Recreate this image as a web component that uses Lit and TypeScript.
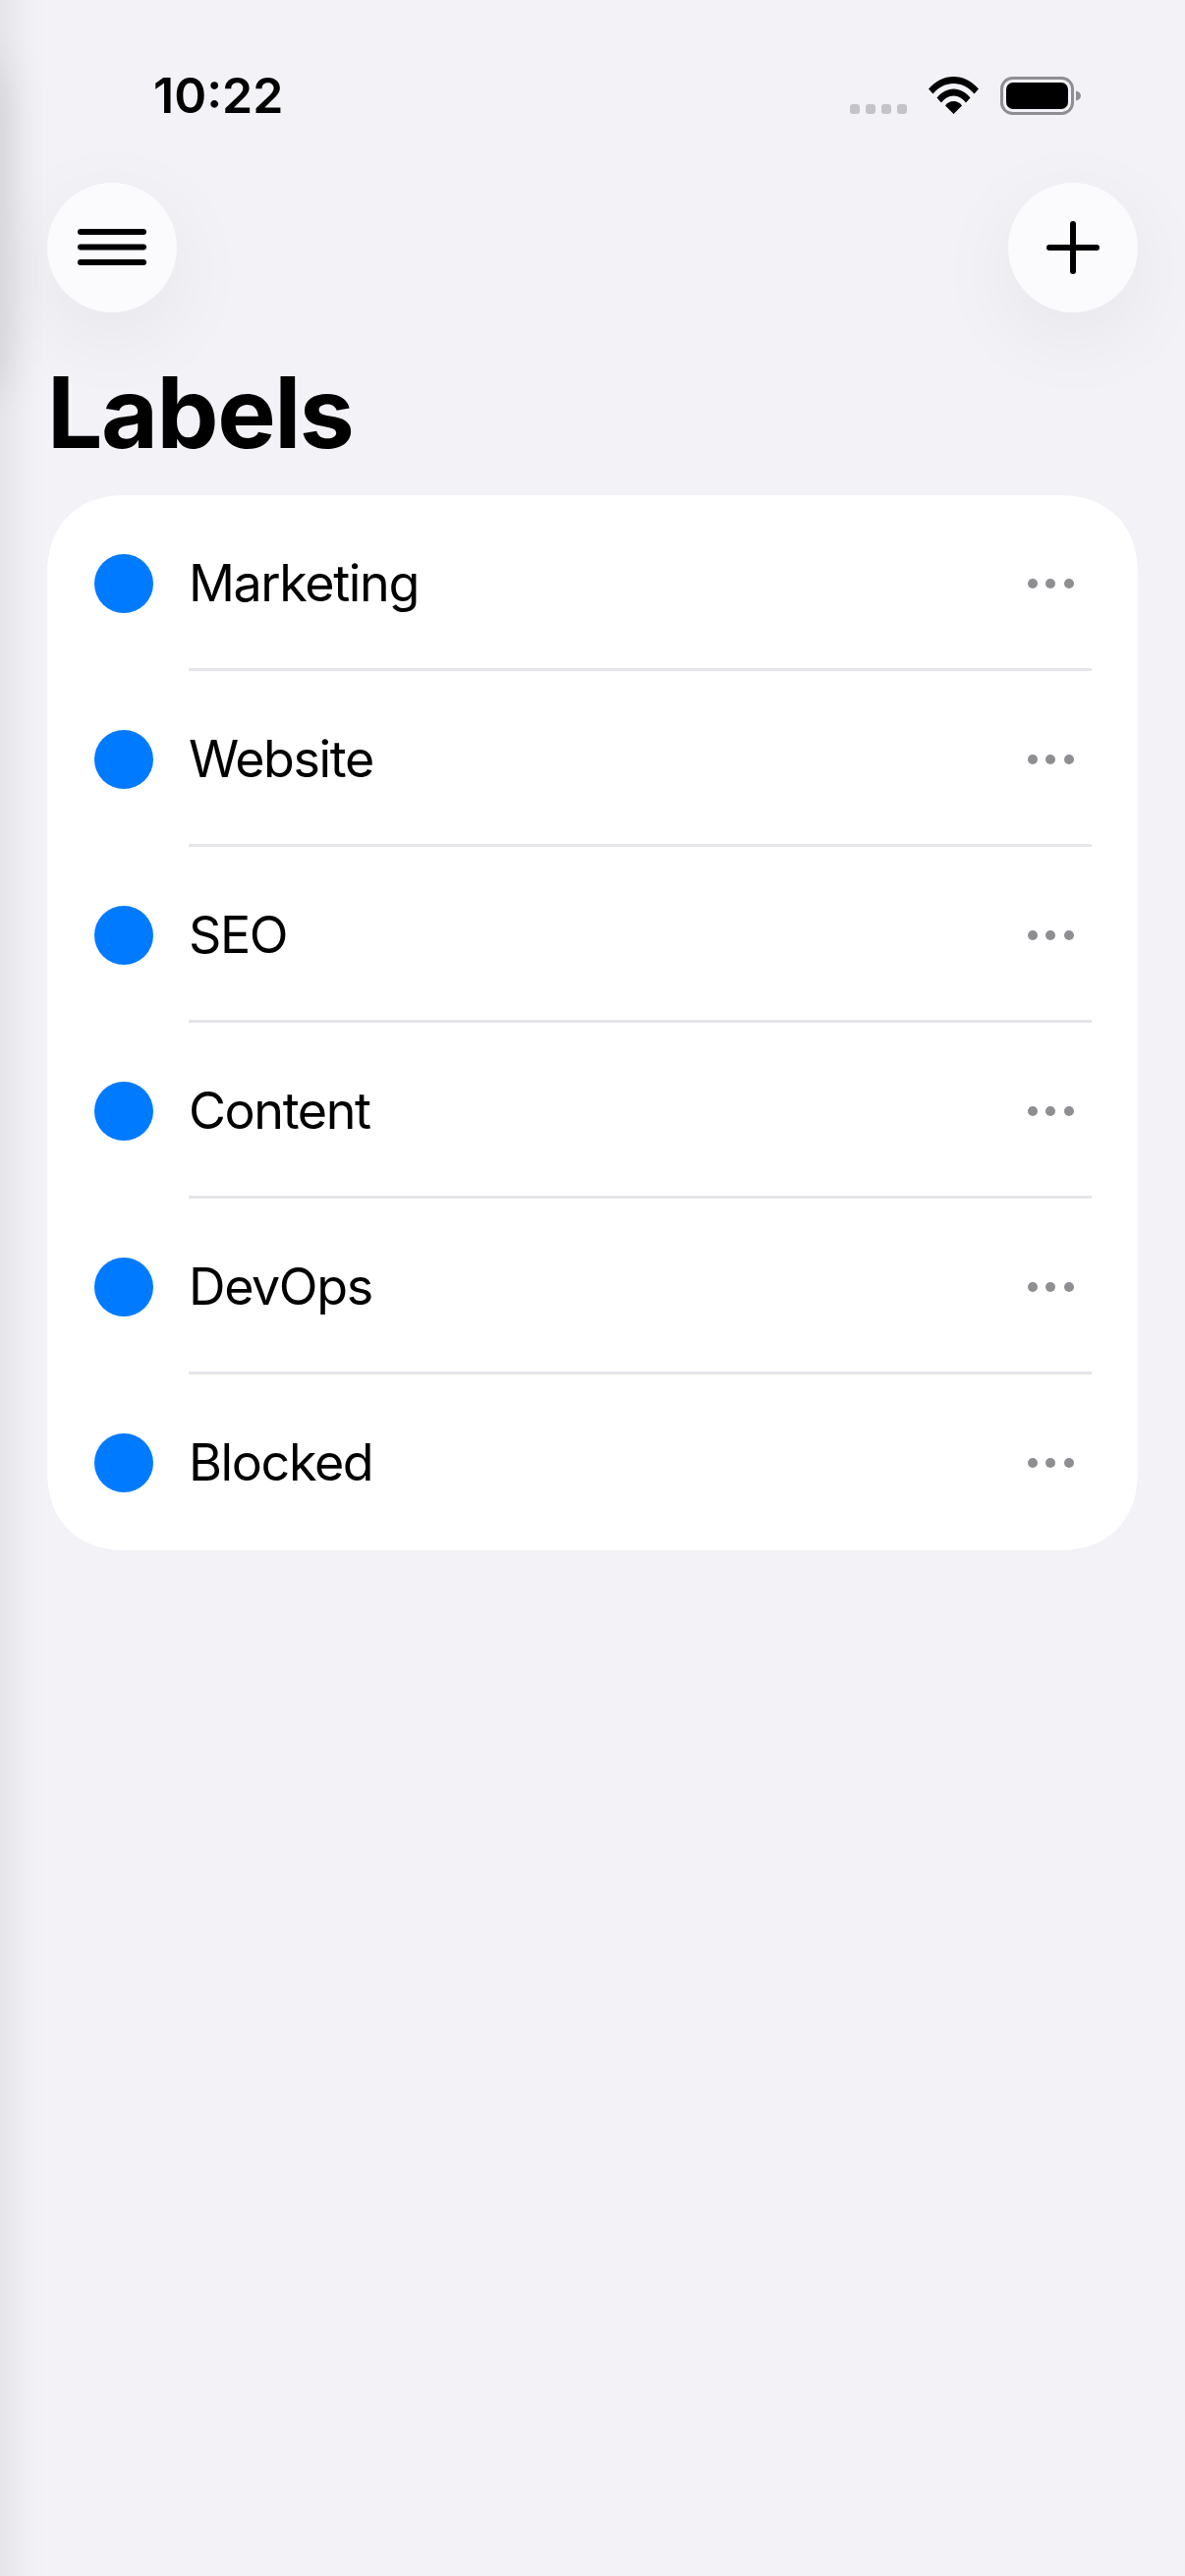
import { css, html, LitElement } from 'lit';
import { customElement } from 'lit/decorators.js';

const LABELS = ['Marketing', 'Website', 'SEO', 'Content', 'DevOps', 'Blocked'];

@customElement('app-root')
export class AppRoot extends LitElement {
  static override styles = css`
    :host {
      display: block;
      position: relative;
      width: 100%;
      height: 2622px;
      overflow: hidden;
      background: #f2f2f7;
      color: #000;
      font-family: Inter, 'Liberation Sans', sans-serif;
    }

    /* shadow of the drawer parked off-screen on the left */
    .edge-shadow {
      position: absolute;
      left: -40px;
      top: -100px;
      width: 40px;
      height: 2822px;
      box-shadow: 0 0 50px rgba(0, 0, 0, 0.12);
    }

    .edge-shadow.top {
      top: 70px;
      height: 320px;
      box-shadow: 0 0 50px rgba(0, 0, 0, 0.12);
    }

    .status {
      display: flex;
      align-items: center;
      justify-content: space-between;
      height: 186px;
      padding: 0 106px 0 156px;
      box-sizing: border-box;
    }

    .time {
      font-size: 50px;
      font-weight: 560;
      line-height: 1;
      margin-top: 8px;
    }

    .indicators {
      display: flex;
      align-items: flex-start;
      margin-top: 9px;
    }

    .signal {
      display: flex;
      gap: 6px;
      margin-top: 28px;
      margin-right: 22px;
    }

    .signal span {
      width: 10px;
      height: 10px;
      border-radius: 3px;
      background: #c4c4c8;
    }

    .wifi {
      width: 51px;
      height: 38px;
      margin-right: 22px;
    }

    .battery {
      width: 82px;
      height: 39px;
    }

    .toolbar {
      display: flex;
      justify-content: space-between;
      padding: 0 48px;
    }

    .round {
      display: flex;
      align-items: center;
      justify-content: center;
      width: 132px;
      height: 132px;
      border-radius: 50%;
      background: #fbfbfe;
      box-shadow: 0 24px 90px rgba(0, 0, 0, 0.06);
    }

    h1 {
      margin: 0;
      padding: 52px 48px 0;
      font-size: 100px;
      font-weight: 700;
      line-height: 1;
      letter-spacing: -1.5px;
    }

    .card {
      margin: 34px 48px 0;
      background: #fff;
      border-radius: 66px;
    }

    @supports (corner-shape: squircle) {
      .card {
        border-radius: 82px;
        corner-shape: superellipse(1.2);
      }
    }

    .row {
      display: flex;
      align-items: center;
      height: 179px;
      padding-left: 48px;
      box-sizing: border-box;
    }

    .dot {
      flex: none;
      width: 60px;
      height: 60px;
      border-radius: 50%;
      background: #007aff;
      margin-right: 36px;
    }

    .body {
      flex: 1;
      display: flex;
      align-items: center;
      justify-content: space-between;
      align-self: stretch;
      margin-right: 47px;
      padding: 3px 18px 0 0;
      border-bottom: 3px solid #e5e5ea;
    }

    .row:last-child .body {
      border-bottom-color: transparent;
    }

    .name {
      font-size: 52px;
      font-weight: 425;
      line-height: 1;
      letter-spacing: -1.4px;
    }

    .more {
      display: flex;
      gap: 8.6px;
    }

    .more span {
      width: 10px;
      height: 10px;
      border-radius: 50%;
      background: #8e8e93;
    }
  `;

  override render() {
    return html`
      <div class="edge-shadow"></div>
      <div class="edge-shadow top"></div>
      <div class="status">
        <div class="time">10:22</div>
        <div class="indicators">
          <div class="signal"><span></span><span></span><span></span><span></span></div>
          <svg class="wifi" viewBox="0 0 51 38" fill="#000">
            <path d="M0 12.5C7 4.5 16 0 25.5 0S44 4.5 51 12.5L46.5 17.5C41 11 33.5 7 25.5 7S10 11 4.5 17.5Z" />
            <path d="M8.5 21.5C13 16 19 12.5 25.5 12.5S38 16 42.5 21.5L38 26.5C35 22.5 30.5 19.5 25.5 19.5S16 22.5 13 26.5Z" />
            <path d="M17 29.5C19 26.5 22 25 25.5 25S32 26.5 34 29.5L25.5 38Z" />
          </svg>
          <svg class="battery" viewBox="0 0 82 39">
            <rect x="1.5" y="1.5" width="72" height="36" rx="11" fill="none" stroke="#8e8e93" stroke-width="3" />
            <rect x="6" y="6" width="63" height="27" rx="7" fill="#000" />
            <path d="M77 14.5C80 15 82 17 82 19.5S80 24 77 24.5Z" fill="#8e8e93" />
          </svg>
        </div>
      </div>
      <div class="toolbar">
        <div class="round">
          <svg width="70" height="38" viewBox="0 0 70 38" stroke="#000" stroke-width="6" stroke-linecap="round">
            <path d="M3 3H67M3 18.500H67M3 34H67" />
          </svg>
        </div>
        <div class="round">
          <svg width="54" height="54" viewBox="0 0 54 54" stroke="#000" stroke-width="6" stroke-linecap="round">
            <path d="M27 3V51M3 27H51" />
          </svg>
        </div>
      </div>
      <h1>Labels</h1>
      <div class="card">
        ${LABELS.map(
          (label) => html`
            <div class="row">
              <div class="dot"></div>
              <div class="body">
                <span class="name">${label}</span>
                <div class="more"><span></span><span></span><span></span></div>
              </div>
            </div>
          `,
        )}
      </div>
    `;
  }
}

declare global {
  interface HTMLElementTagNameMap {
    'app-root': AppRoot;
  }
}
